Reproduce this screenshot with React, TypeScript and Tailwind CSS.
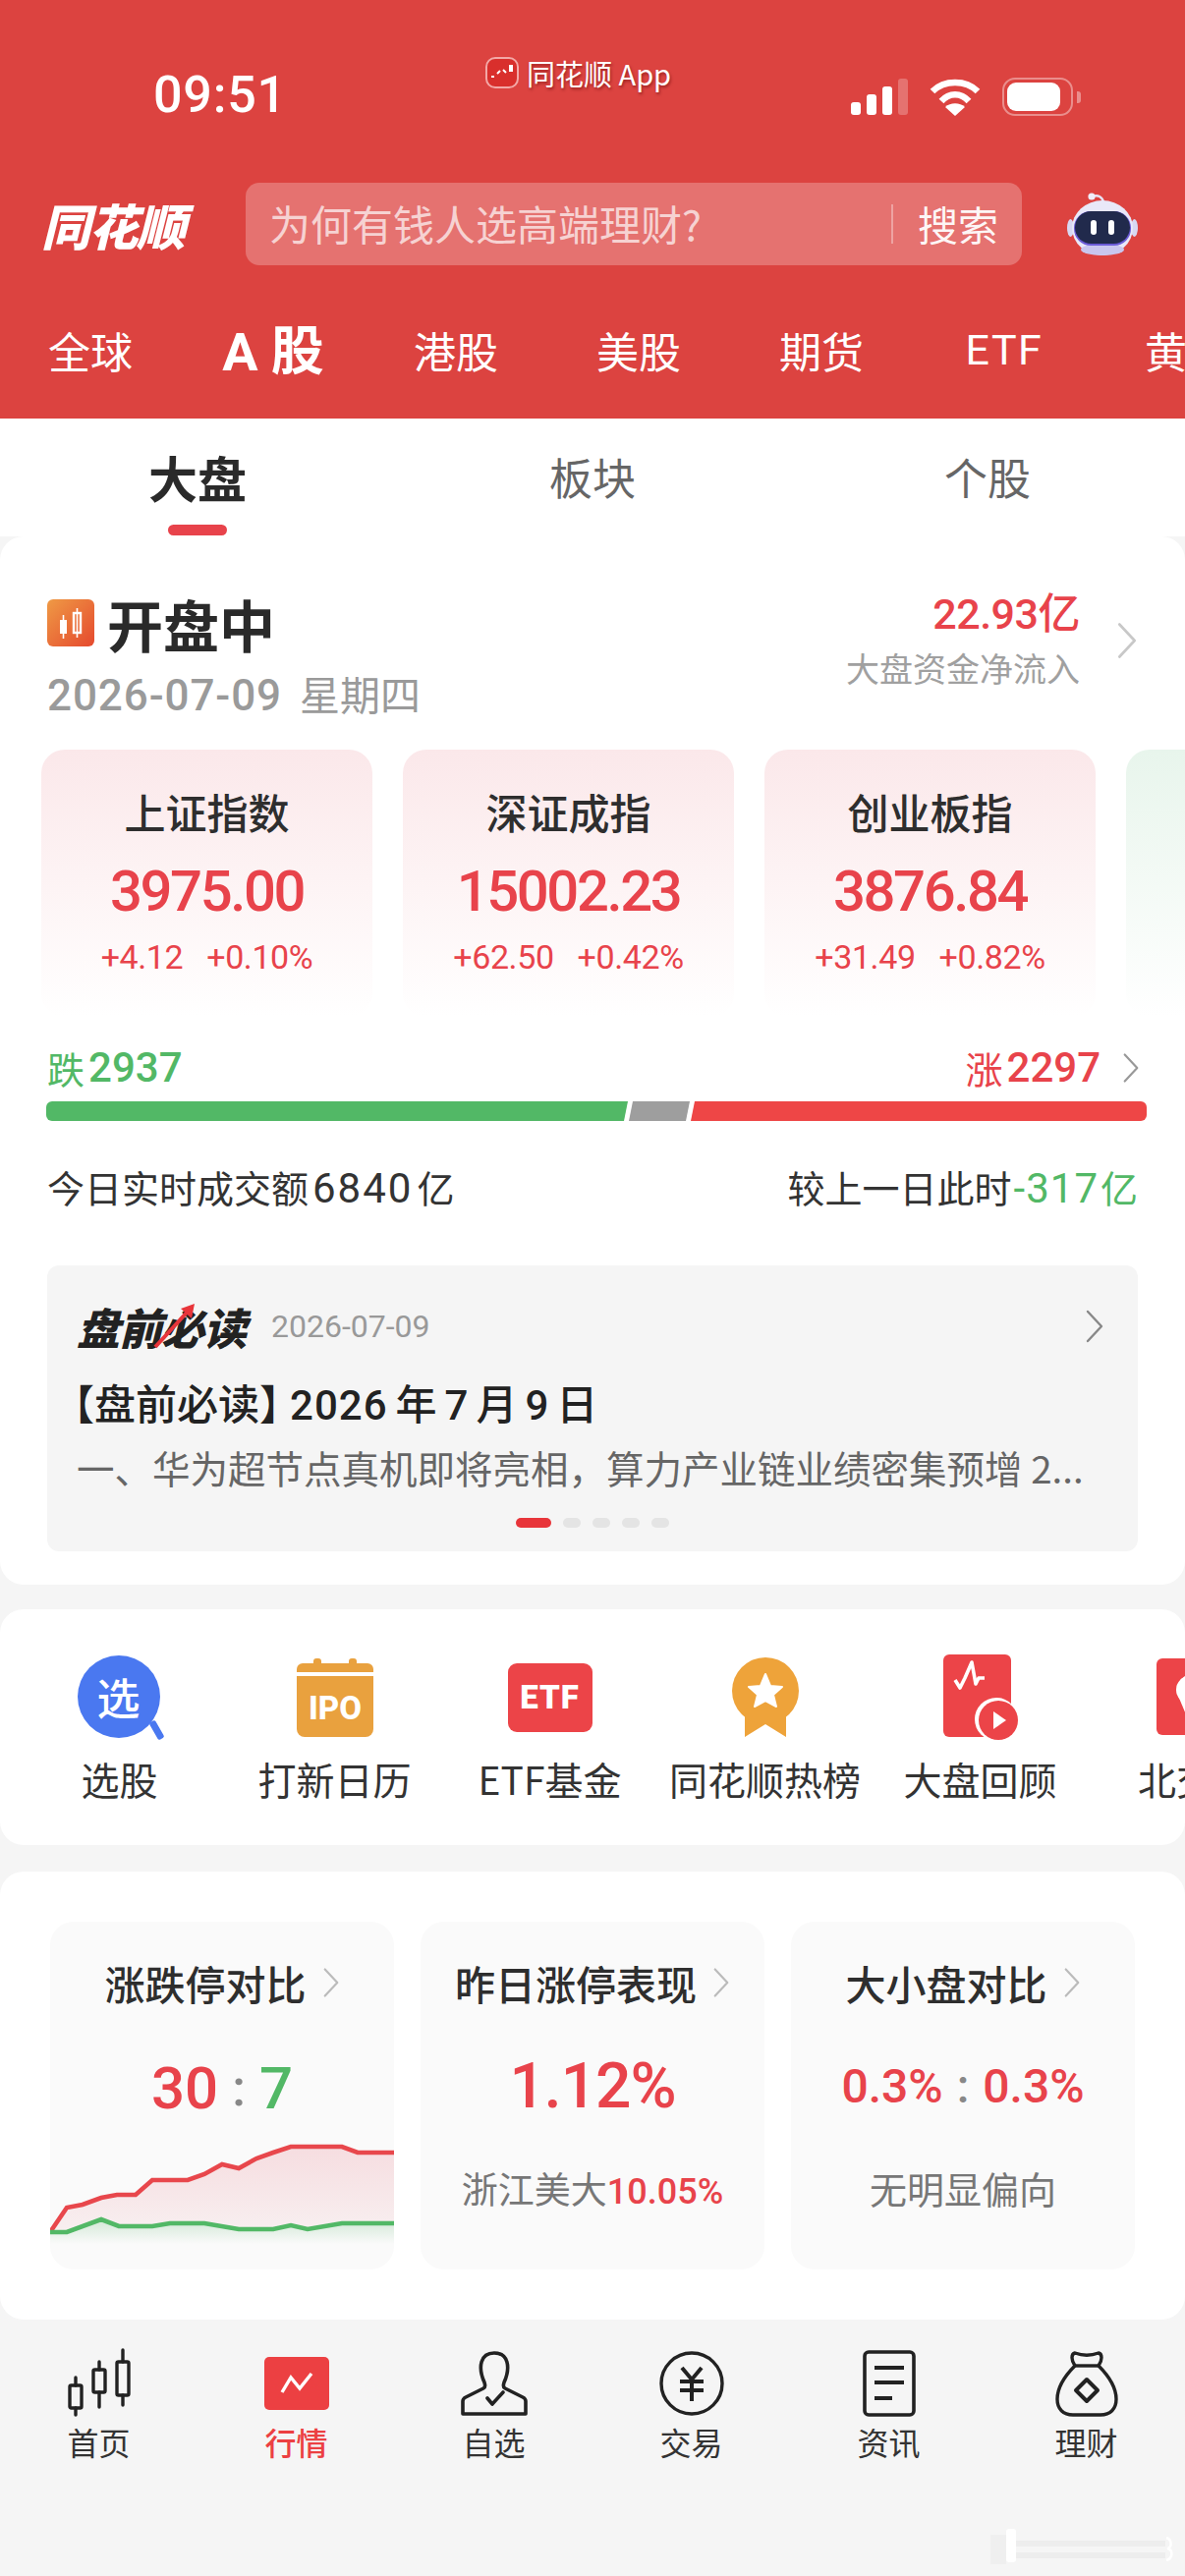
import React from "react";

const F = "font-['Noto_Sans_CJK_SC','Noto_Sans',sans-serif]";
const N = "font-['Roboto','Noto_Sans_CJK_SC',sans-serif]";

function Chevron({ className = "", color = "#bbbbbb" }: { className?: string; color?: string }) {
  return (
    <svg viewBox="0 0 20 34" className={className} fill="none">
      <path d="M3 2 L17 17 L3 32" stroke={color} strokeWidth="2.4" strokeLinecap="round" strokeLinejoin="round" />
    </svg>
  );
}

function Robot() {
  return (
    <svg viewBox="0 0 72 66" className="w-[72px] h-[66px]">
      <path d="M26 5 C31 3 36 5 37 11" stroke="#e7e3f5" strokeWidth="2.5" fill="none" />
      <circle cx="25" cy="5" r="3.6" fill="#f0edfa" />
      <ellipse cx="3.5" cy="37" rx="3.5" ry="9" fill="#d8d8f2" />
      <ellipse cx="68.5" cy="37" rx="3.5" ry="9" fill="#d8d8f2" />
      <ellipse cx="36" cy="37" rx="31" ry="28" fill="#e9e8f8" />
      <ellipse cx="36" cy="59" rx="22" ry="6" fill="#c9c6ee" />
      <rect x="7" y="20" width="58" height="35" rx="17" fill="#6b5bd6" />
      <rect x="8" y="20" width="56" height="33" rx="16.5" fill="#212a4c" />
      <rect x="24" y="29" width="6" height="15" rx="3" fill="#fff" />
      <rect x="42" y="29" width="6" height="15" rx="3" fill="#fff" />
    </svg>
  );
}

function Signal() {
  return (
    <div className="flex items-end gap-[6px] h-[37px]">
      <div className="w-[10px] h-[13px] rounded-[3px] bg-white" />
      <div className="w-[10px] h-[21px] rounded-[3px] bg-white" />
      <div className="w-[10px] h-[29px] rounded-[3px] bg-white" />
      <div className="w-[10px] h-[37px] rounded-[3px] bg-white/25" />
    </div>
  );
}

function Wifi() {
  return (
    <svg viewBox="0 0 52 38" className="w-[52px] h-[38px]" fill="none" stroke="#fff" strokeWidth="6.5">
      <path d="M3 13 C15 1 37 1 49 13" />
      <path d="M12 23 C20 14 32 14 40 23" />
      <path d="M26 38 L16 29 C21 24 31 24 36 29 Z" fill="#fff" stroke="none" />
    </svg>
  );
}

function Battery() {
  return (
    <div className="flex items-center gap-[4px]">
      <div className="w-[72px] h-[39px] rounded-[13px] border-[2.5px] border-white/40 p-[3px]">
        <div className="h-full w-[54px] rounded-[9px] bg-white" />
      </div>
      <div className="w-[4px] h-[12px] rounded-r-[3px] bg-white/40" />
    </div>
  );
}

function AppBadge() {
  return (
    <svg viewBox="0 0 34 32" className="w-[34px] h-[32px]">
      <rect x="1" y="1" width="32" height="30" rx="9" fill="#d92f2c" stroke="#f3a8a6" strokeWidth="2" />
      <path d="M6 20 H9 M12 17 L15 14 M18 13 L21 16 M24 11 H28" stroke="#fff" strokeWidth="2" fill="none" />
      <rect x="24" y="8" width="4" height="7" fill="#fff" />
    </svg>
  );
}

function IconXuan() {
  return (
    <div className="relative w-[86px] h-[86px]">
      <div className={`w-[84px] h-[84px] rounded-full bg-[#4a78f0] flex items-center justify-center text-white text-[44px] font-medium leading-none ${F}`}>选</div>
      <div className="absolute right-[2px] bottom-[0px] w-[7px] h-[20px] bg-[#4a78f0] rotate-[-30deg] rounded-[2px]" />
    </div>
  );
}

function IconIpo() {
  return (
    <svg viewBox="0 0 78 80" className="w-[78px] h-[80px]">
      <rect x="17" y="0" width="8" height="8" rx="3" fill="#e9a13e" />
      <rect x="53" y="0" width="8" height="8" rx="3" fill="#e9a13e" />
      <path d="M6 5 H72 a6 6 0 0 1 6 6 V14 H0 V11 a6 6 0 0 1 6-6 Z" fill="#e9a13e" />
      <path d="M0 18 H78 V72 a8 8 0 0 1-8 8 H8 a8 8 0 0 1-8-8 Z" fill="#e9a13e" />
      <text x="39" y="62" textAnchor="middle" fill="#fff" fontSize="33" fontWeight="800" fontFamily="Roboto" textLength="54" lengthAdjust="spacingAndGlyphs">IPO</text>
    </svg>
  );
}

function IconEtf() {
  return (
    <div className={`w-[86px] h-[70px] rounded-[9px] bg-[#ec4448] flex items-center justify-center text-white text-[33px] font-black tracking-[1px] ${N}`}>ETF</div>
  );
}

function IconMedal() {
  return (
    <svg viewBox="0 0 70 82" className="w-[70px] h-[82px]">
      <path d="M14 50 V81 L35 68 L56 81 V50 Z" fill="#eea33a" />
      <circle cx="35" cy="34" r="34" fill="#eea33a" />
      <path d="M35 17 L40 29 L52 30 L43 38 L46 50 L35 44 L24 50 L27 38 L18 30 L30 29 Z" fill="#fff" strokeLinejoin="round" stroke="#fff" strokeWidth="2" />
    </svg>
  );
}

function IconReview() {
  return (
    <svg viewBox="0 0 76 88" className="w-[76px] h-[88px]">
      <rect x="0" y="0" width="69" height="84" rx="6" fill="#ec4448" />
      <path d="M12 26 L17 34 L22 24 L29 8 L33 30 L36 24 L42 24" fill="none" stroke="#fff" strokeWidth="3.6" strokeLinejoin="round" />
      <circle cx="54" cy="66" r="22" fill="#fff" />
      <circle cx="56" cy="67" r="20" fill="#ec4448" />
      <path d="M51 58 L64 67 L51 76 Z" fill="#fff" />
    </svg>
  );
}

function IconBei() {
  return (
    <svg viewBox="0 0 80 84" className="w-[80px] h-[84px]">
      <rect x="0" y="2" width="90" height="78" rx="6" fill="#ec4448" />
      <path d="M24 24 C30 18 34 18 34 18 V60 Z" fill="#fff" />
      <circle cx="34" cy="34" r="14" fill="#fff" />
      <path d="M22 40 L32 64 L42 40 Z" fill="#fff" />
    </svg>
  );
}

function TabHome() {
  return (
    <svg viewBox="0 0 64 72" className="w-[64px] h-[72px]" fill="none" stroke="#222" strokeWidth="3.4" strokeLinecap="round" strokeLinejoin="round">
      <rect x="2" y="38" width="12" height="23" rx="1.5" />
      <path d="M8 30 V38 M8 61 V68" />
      <rect x="26" y="22" width="12" height="23" rx="1.5" />
      <path d="M32 14 V22 M32 45 V60" />
      <rect x="50" y="14" width="12" height="34" rx="1.5" />
      <path d="M56 2 V14 M56 48 V58" />
    </svg>
  );
}

function TabMarket() {
  return (
    <svg viewBox="0 0 66 54" className="w-[66px] h-[54px]">
      <rect x="0" y="0" width="66" height="54" rx="5" fill="#ec4042" />
      <path d="M18 36 L27 21 L36 32 L48 17" fill="none" stroke="#fff" strokeWidth="3.4" strokeLinejoin="miter" />
    </svg>
  );
}

function TabWatch() {
  return (
    <svg viewBox="0 0 68 66" className="w-[68px] h-[66px]" fill="none" stroke="#222" strokeWidth="3.6" strokeLinecap="round" strokeLinejoin="round">
      <path d="M24 32 C17 16 20 2 34 2 C48 2 51 16 44 32 C43 35 43 37 45 38 L63 47 C65 48 66 49 66 51 V64 H2 V51 C2 49 3 48 5 47 L23 38 C25 37 25 35 24 32 Z" />
      <path d="M27 48 L32 54 L43 42" />
    </svg>
  );
}

function TabTrade() {
  return (
    <svg viewBox="0 0 68 68" className="w-[68px] h-[68px]" fill="none" stroke="#222" strokeWidth="3.4">
      <circle cx="34" cy="34" r="31" />
      <path d="M24 18 L34 30 L44 18 M22 32 H46 M22 41 H46 M34 30 V52" strokeWidth="4" />
    </svg>
  );
}

function TabNews() {
  return (
    <svg viewBox="0 0 54 68" className="w-[54px] h-[68px]" fill="none" stroke="#222" strokeWidth="3.6">
      <rect x="2" y="2" width="50" height="64" rx="4" />
      <path d="M12 18 H42 M12 33 H42 M12 49 H30" strokeWidth="4" />
    </svg>
  );
}

function TabFinance() {
  return (
    <svg viewBox="0 0 64 68" className="w-[64px] h-[68px]" fill="none" stroke="#222" strokeWidth="3.4" strokeLinejoin="round">
      <path d="M20 16 C16 10 16 4 20 3 C28 6 36 6 44 3 C48 4 48 10 44 16" />
      <path d="M20 16 H44" />
      <path d="M20 16 C10 26 2 38 2 50 C2 60 8 66 18 66 H46 C56 66 62 60 62 50 C62 38 54 26 44 16" />
      <path d="M32 30 L43 41 L32 52 L21 41 Z" strokeWidth="4" />
    </svg>
  );
}

function MiniChart() {
  const red = "0,130 17,105 33,102 52,95 68,92 87,92 104,77 140,77 157,71 175,61 192,65 210,55 227,49 245,43 297,43 313,49 350,49";
  const green = "0,130 17,130 52,117 70,124 104,124 122,121 157,121 192,127 227,127 245,123 262,127 297,121 350,121";
  return (
    <svg viewBox="0 30 350 138" className="w-[350px] h-[138px] block">
      <defs>
        <linearGradient id="rg" x1="0" y1="0" x2="0" y2="1">
          <stop offset="0" stopColor="#f6dde0" />
          <stop offset="1" stopColor="#f8eff0" />
        </linearGradient>
        <linearGradient id="gg" x1="0" y1="0" x2="0" y2="1">
          <stop offset="0" stopColor="#d2e8d6" />
          <stop offset="1" stopColor="#fafafa" />
        </linearGradient>
      </defs>
      <polygon points={`${red} 350,121 ${green.split(" ").reverse().join(" ")}`} fill="url(#rg)" />
      <polygon points={`${green} 350,142 0,142`} fill="url(#gg)" />
      <polyline points={red} fill="none" stroke="#e8474c" strokeWidth="4.6" />
      <polyline points={green} fill="none" stroke="#52b866" strokeWidth="4.6" />
    </svg>
  );
}

function Watermark() {
  return (
    <svg viewBox="0 0 206 72" className="absolute right-0 bottom-0 w-[206px] h-[72px]" fill="none">
      <rect x="24" y="24" width="10" height="34" rx="3" fill="#ffffff" />
      <rect x="8" y="30" width="16" height="30" fill="#ececec" opacity="0.7" />
      <rect x="34" y="36" width="152" height="6" fill="#ebebeb" opacity="0.8" />
      <rect x="34" y="48" width="152" height="6" fill="#ebebeb" opacity="0.8" />
      <path d="M187 33 C193 35 193 43 188 44 C194 45 194 54 187 56" stroke="#ffffff" strokeWidth="2.5" />
    </svg>
  );
}

function IndexCard({ t, v, a, b }: { t: string; v: string; a: string; b: string }) {
  return (
    <div className="w-[337px] h-[272px] shrink-0 rounded-[24px] bg-gradient-to-b from-[#fbe8ea] to-white flex flex-col items-center pt-[37px]">
      <div className={`text-[42px] leading-[52px] font-medium text-[#2e2e2e] ${F}`}>{t}</div>
      <div className={`mt-[25px] text-[58px] leading-[60px] font-medium tracking-[-2.4px] text-[#e8434b] ${N}`}>{v}</div>
      <div className={`mt-[17px] flex gap-[24px] text-[34px] leading-[40px] tracking-[-0.4px] text-[#e8434b] ${N}`}>
        <span>{a}</span>
        <span>{b}</span>
      </div>
    </div>
  );
}

function StatCard({ t, children }: { t: string; children: React.ReactNode }) {
  return (
    <div className="relative w-[350px] h-[354px] rounded-[24px] bg-[#fafafa] overflow-hidden flex flex-col">
      <div className="h-[50px] mt-[37px] flex items-center justify-center gap-[16px]">
        <span className={`text-[41px] font-medium leading-[50px] text-[#2e2e2e] ${F}`}>{t}</span>
        <Chevron className="w-[18px] h-[32px]" />
      </div>
      {children}
    </div>
  );
}

const quick: [React.ReactNode, string][] = [
  [<IconXuan />, "选股"],
  [<IconIpo />, "打新日历"],
  [<IconEtf />, "ETF基金"],
  [<IconMedal />, "同花顺热榜"],
  [<IconReview />, "大盘回顾"],
  [<IconBei />, "北交所"],
];

const bottom: [React.ReactNode, string, boolean][] = [
  [<TabHome />, "首页", false],
  [<TabMarket />, "行情", true],
  [<TabWatch />, "自选", false],
  [<TabTrade />, "交易", false],
  [<TabNews />, "资讯", false],
  [<TabFinance />, "理财", false],
];

export default function App() {
  return (
    <div className={`relative w-[1206px] h-[2622px] overflow-hidden bg-[#f5f5f5] ${F}`}>
      {/* red header */}
      <div className="h-[426px] bg-[#dc4340] text-white flex flex-col">
        <div className="relative h-[186px] shrink-0 flex items-start justify-between pl-[156px] pr-[106px] pt-[68px]">
          <div className={`text-[52px] leading-[58px] font-medium tracking-[0.8px] ${N}`}>09:51</div>
          <div className="absolute left-[494px] top-[57px] flex items-center gap-[8px] text-[29px] leading-[34px] [text-shadow:1px_2px_3px_rgba(90,0,0,0.5)]">
            <AppBadge />
            <span>同花顺 App</span>
          </div>
          <div className="flex items-center gap-[22px] pt-[11px]">
            <Signal />
            <Wifi />
            <Battery />
          </div>
        </div>

        <div className="flex items-center h-[84px] pl-[42px] shrink-0">
          <div className="w-[208px] text-[50px] leading-[56px] font-black italic tracking-[-1.5px]">同花顺</div>
          <div className="w-[790px] h-[84px] rounded-[14px] bg-white/25 flex items-center pl-[24px] pr-[24px]">
            <span className="flex-1 text-[42px] leading-[50px] text-white/70 -mt-[2px]">为何有钱人选高端理财?</span>
            <div className="w-[2px] h-[40px] bg-white/35 mr-[25px]" />
            <span className="text-[41px] leading-[50px] text-white/95 -mt-[2px]">搜索</span>
          </div>
          <div className="ml-[46px]"><Robot /></div>
        </div>

        <div className="flex items-center flex-1 -ml-[1px] pt-[16px]">
          {["全球", "A股", "港股", "美股", "期货", "ETF", "黄金"].map((s) => (
            <div key={s} className={`w-[186px] shrink-0 text-center ${s === "A股" ? "text-[54px] font-bold" : "text-[43px]"} ${s === "ETF" ? `${N} tracking-[1.5px]` : ""}`}>
              {s === "A股" ? <span className={N}>A <span className={F}>股</span></span> : s}
            </div>
          ))}
        </div>
      </div>

      {/* sub tabs */}
      <div className="relative h-[120px] bg-white grid grid-cols-3 items-center pb-[2px]">
        <div className="text-center text-[50px] font-bold text-[#2a2a2a]">大盘</div>
        <div className="text-center text-[44px] text-[#666]">板块</div>
        <div className="text-center text-[44px] text-[#666]">个股</div>
        <div className="absolute left-[171px] bottom-[1px] w-[60px] h-[11px] rounded-[6px] bg-[#e8434b]" />
      </div>

      {/* main card */}
      <div className="h-[1067px] bg-white rounded-[24px] px-[48px] pt-[55px] relative">
        <div className="flex justify-between h-[139px]">
          <div>
            <div className="flex items-center gap-[13px] h-[66px]">
              <svg viewBox="0 0 48 48" className="w-[48px] h-[48px]">
                <defs>
                  <linearGradient id="og" x1="0" y1="0" x2="1" y2="1">
                    <stop offset="0" stopColor="#ef9a45" />
                    <stop offset="1" stopColor="#e5492e" />
                  </linearGradient>
                </defs>
                <rect width="48" height="48" rx="6" fill="url(#og)" />
                <rect x="13" y="21" width="7" height="14" fill="#fff" />
                <path d="M16.5 16 V40" stroke="#fff" strokeWidth="1.6" />
                <rect x="27" y="14" width="7" height="20" fill="none" stroke="#fff" strokeWidth="2.4" />
                <path d="M30.5 9 V39" stroke="#fff" strokeWidth="1.6" />
              </svg>
              <span className="text-[57px] leading-[66px] font-bold text-[#2a2a2a]">开盘中</span>
            </div>
            <div className="mt-[13px] flex items-baseline gap-[18px] text-[#9a9a9a] leading-[50px]">
              <span className={`text-[44px] font-medium tracking-[0.9px] ${N}`}>2026-07-09</span>
              <span className="text-[41px]">星期四</span>
            </div>
          </div>
          <div className="flex items-center gap-[37px] -mt-[38px]">
            <div className="flex flex-col items-end">
              <div className={`text-[43px] leading-[52px] -mt-[3px] font-medium tracking-[-0.5px] text-[#e8434b] ${N}`}>22.93亿</div>
              <div className="text-[34px] leading-[44px] text-[#a0a0a0] mt-[7px]">大盘资金净流入</div>
            </div>
            <Chevron className="w-[22px] h-[38px]" color="#c8c8c8" />
          </div>
        </div>

        <div className="flex gap-[31px] -ml-[6px] mt-[23px] w-[1300px]">
          <IndexCard t="上证指数" v="3975.00" a="+4.12" b="+0.10%" />
          <IndexCard t="深证成指" v="15002.23" a="+62.50" b="+0.42%" />
          <IndexCard t="创业板指" v="3876.84" a="+31.49" b="+0.82%" />
          <div className="w-[337px] h-[272px] shrink-0 rounded-[24px] bg-gradient-to-b from-[#e8f5ec] to-white" />
        </div>

        <div className="flex justify-between items-center mt-[27px] h-[50px]">
          <div className="text-[#52b866] text-[38px] leading-[50px] flex items-center gap-[4px]">
            跌<span className={`font-medium text-[42px] ${N}`}>2937</span>
          </div>
          <div className="text-[#e8434b] text-[38px] leading-[50px] flex items-center gap-[4px]">
            涨<span className={`font-medium text-[42px] ${N}`}>2297</span>
            <Chevron className="w-[18px] h-[32px] ml-[18px] -mr-[2px]" color="#999999" />
          </div>
        </div>

        <div className="mt-[9px] w-[1120px] h-[20px] -ml-[1px] rounded-[6px] overflow-hidden flex gap-[3px]">
          <div className="w-[592px] -mr-[2px] bg-[#52b866] [clip-path:polygon(0_0,100%_0,calc(100%-4px)_100%,0_100%)]" />
          <div className="w-[62px] -mr-[2px] bg-[#9e9e9e] [clip-path:polygon(4px_0,100%_0,calc(100%-4px)_100%,0_100%)]" />
          <div className="flex-1 bg-[#ee4646] [clip-path:polygon(4px_0,100%_0,100%_100%,0_100%)]" />
        </div>

        <div className="flex justify-between mt-[42px] text-[38px] leading-[50px] text-[#333]">
          <div>今日实时成交额<span className={`${N} text-[42px] tracking-[2px] mx-[4px]`}>6840</span>亿</div>
          <div>较上一日此时<span className="text-[#52b866]"><span className={`${N} text-[42px] tracking-[1px] mx-[2px]`}>-317</span>亿</span></div>
        </div>

        <div className="mt-[53px] w-[1110px] h-[291px] rounded-[12px] bg-[#f5f5f5] pl-[30px] pr-[38px] pt-[32px] relative">
          <div className="flex items-center h-[60px]">
            <div className="relative text-[44px] leading-[56px] font-black italic text-[#222] tracking-[-1px]">
              盘前必读
              <svg viewBox="0 0 50 50" className="absolute left-[76px] top-[2px] w-[50px] h-[50px]">
                <path d="M4 47 L36 12" stroke="#e8353a" strokeWidth="4" />
                <path d="M30 8 L44 3 L41 18 Z" fill="#e8353a" />
              </svg>
            </div>
            <span className={`ml-[26px] text-[32px] text-[#999] ${N}`}>2026-07-09</span>
            <Chevron className="ml-auto w-[20px] h-[36px] -mr-[4px]" color="#888888" />
          </div>
          <div className="mt-[22px] -ml-[3px] text-[42px] leading-[50px] font-medium text-[#222] whitespace-nowrap">
            <span className="[font-feature-settings:'halt']">【盘前必读】</span><span className={`${N} ml-[10px] mr-[8px] tracking-[1px]`}>2026</span>年<span className={`${N} mx-[8px]`}>7</span>月<span className={`${N} mx-[8px]`}>9</span>日
          </div>
          <div className="mt-[14px] text-[38.5px] leading-[46px] text-[#666] whitespace-nowrap">一、华为超节点真机即将亮相，算力产业链业绩密集预增 2...</div>
          <div className="absolute left-[477px] bottom-[24px] flex gap-[12px] items-center">
            <div className="w-[36px] h-[10px] rounded-[5px] bg-[#e8353a]" />
            <div className="w-[18px] h-[10px] rounded-[5px] bg-[#e4e4e4]" />
            <div className="w-[18px] h-[10px] rounded-[5px] bg-[#e4e4e4]" />
            <div className="w-[18px] h-[10px] rounded-[5px] bg-[#e4e4e4]" />
            <div className="w-[18px] h-[10px] rounded-[5px] bg-[#e4e4e4]" />
          </div>
        </div>
      </div>

      {/* quick links */}
      <div className="mt-[25px] h-[240px] bg-white rounded-[24px] overflow-hidden flex pl-[12px] pt-[44px]">
        {quick.map(([icon, label]) => (
          <div key={label} className="w-[219px] shrink-0 flex flex-col items-center">
            <div className="h-[92px] flex items-center justify-center">{icon}</div>
            <div className="mt-[12px] text-[39px] leading-[48px] text-[#333] whitespace-nowrap">{label}</div>
          </div>
        ))}
      </div>

      {/* stats */}
      <div className="mt-[27px] h-[456px] bg-white rounded-[24px] flex gap-[27px] pl-[51px] pt-[51px]">
        <StatCard t="涨跌停对比">
          <div className={`mt-[47px] h-[72px] flex items-center justify-center gap-[14px] text-[60px] leading-[72px] font-medium ${N}`}>
            <span className="text-[#e8434b]">30</span>
            <span className="text-[#888] text-[52px]">:</span>
            <span className="text-[#52b866]">7</span>
          </div>
          <div className="absolute left-0 bottom-0"><MiniChart /></div>
        </StatCard>
        <StatCard t="昨日涨停表现">
          <div className={`mt-[45px] h-[72px] flex items-center justify-center text-[64px] tracking-[-1px] font-medium text-[#e8434b] ${N}`}>1.12%</div>
          <div className="mt-[42px] text-center text-[37px] leading-[50px] text-[#777]">
            浙江美大<span className={`text-[#e8434b] font-medium text-[36px] ${N}`}>10.05%</span>
          </div>
        </StatCard>
        <StatCard t="大小盘对比">
          <div className={`mt-[45px] h-[72px] flex items-center justify-center gap-[14px] text-[48px] font-medium text-[#e8434b] ${N}`}>
            <span>0.3%</span><span className="text-[#888]">:</span><span>0.3%</span>
          </div>
          <div className="mt-[42px] text-center text-[38px] leading-[50px] text-[#777]">无明显偏向</div>
        </StatCard>
      </div>

      {/* bottom nav */}
      <div className="grid grid-cols-6 pt-[28px]">
        {bottom.map(([icon, label, active]) => (
          <div key={label} className="flex flex-col items-center">
            <div className="h-[74px] flex items-center justify-center">{icon}</div>
            <div className={`mt-[1px] text-[32px] leading-[42px] ${active ? "text-[#ec4042] font-medium" : "text-[#333]"}`}>{label}</div>
          </div>
        ))}
      </div>

      <Watermark />
    </div>
  );
}
